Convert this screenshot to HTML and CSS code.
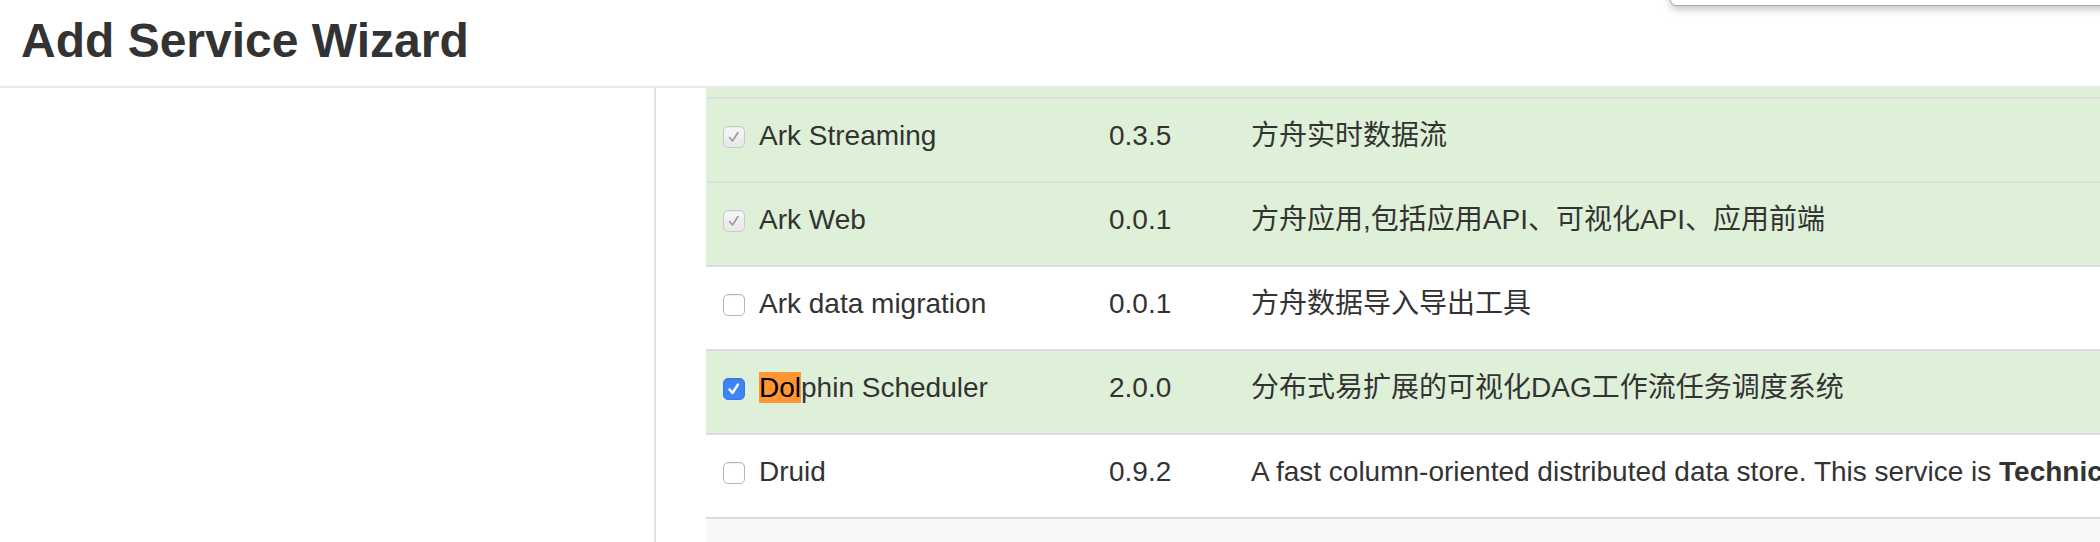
FILE: index.html
```html
<!DOCTYPE html>
<html lang="en">
<head>
<meta charset="utf-8">
<title>Add Service Wizard</title>
<link rel="stylesheet" href="styles.css">
</head>
<body>
<div class="page">
  <header class="wizard-header">
    <h1 class="wizard-title">Add Service Wizard</h1>
  </header>
  <div class="wizard-body">
    <aside class="wizard-steps"></aside>
    <main class="wizard-content">
      <div class="service-table">
        <div class="svc-row success clipped"></div>
        <div class="svc-row success">
          <div class="cell name"><span class="cb cb-disabled"><svg viewBox="0 0 22 22"><path d="M6.5 11.5 L9.5 15 L15 6.5" /></svg></span><span>Ark Streaming</span></div>
          <div class="cell version">0.3.5</div>
          <div class="cell desc">方舟实时数据流</div>
        </div>
        <div class="svc-row success">
          <div class="cell name"><span class="cb cb-disabled"><svg viewBox="0 0 22 22"><path d="M6.5 11.5 L9.5 15 L15 6.5" /></svg></span><span>Ark Web</span></div>
          <div class="cell version">0.0.1</div>
          <div class="cell desc">方舟应用,包括应用API、可视化API、应用前端</div>
        </div>
        <div class="svc-row">
          <div class="cell name"><span class="cb"></span><span>Ark data migration</span></div>
          <div class="cell version">0.0.1</div>
          <div class="cell desc">方舟数据导入导出工具</div>
        </div>
        <div class="svc-row success">
          <div class="cell name"><span class="cb cb-checked"><svg viewBox="0 0 22 22"><path d="M6.5 11.5 L9.5 15 L15 6.5" /></svg></span><span><mark class="find-hit">Dol</mark>phin Scheduler</span></div>
          <div class="cell version">2.0.0</div>
          <div class="cell desc">分布式易扩展的可视化DAG工作流任务调度系统</div>
        </div>
        <div class="svc-row">
          <div class="cell name"><span class="cb"></span><span>Druid</span></div>
          <div class="cell version">0.9.2</div>
          <div class="cell desc">A fast column-oriented distributed data store. This service is <b>Technical Preview</b>.</div>
        </div>
        <div class="svc-row striped"></div>
      </div>
    </main>
  </div>
  <div class="popover"></div>
</div>
</body>
</html>
```
FILE: styles.css
```css
html, body {
  margin: 0;
  padding: 0;
  background: #fff;
  overflow: hidden;
}
body {
  width: 2100px;
  height: 542px;
  font-family: "Liberation Sans", Arial, "Noto Sans CJK SC", sans-serif;
  color: #333;
}
.page {
  position: relative;
  width: 2100px;
  height: 542px;
  overflow: hidden;
}
.wizard-header {
  border-bottom: 2px solid #e8e8e8;
  padding-left: 21px;
  box-sizing: border-box;
  height: 88px;
}
.wizard-title {
  margin: 0;
  padding-top: 14px;
  font-size: 48px;
  line-height: 54px;
  font-weight: bold;
  color: #333;
}
.wizard-body {
  display: flex;
  height: 454px;
}
.wizard-steps {
  width: 654px;
  flex: none;
  border-right: 2px solid #e3e3e3;
}
.wizard-content {
  flex: none;
  padding-left: 50px;
  width: 1600px;
}
.service-table {
  width: 1600px;
}
.svc-row {
  display: grid;
  grid-template-columns: 403px 142px 1055px;
  height: 84px;
  box-sizing: border-box;
  border-top: 2px solid #dcdcdc;
  font-size: 28px;
  line-height: 40px;
  white-space: nowrap;
}
.svc-row.success {
  background: #dff0d8;
}
.svc-row.clipped {
  height: 9px;
  border-top: none;
}
.svc-row.striped {
  background: #f8f8f8;
}
.cell {
  padding-top: 17px;
  overflow: hidden;
}
.cell.name {
  display: flex;
  align-items: flex-start;
  padding-left: 17px;
}
.cell.desc {
  overflow: visible;
}
.cb {
  flex: none;
  width: 22px;
  height: 22px;
  margin-top: 10px;
  margin-right: 14px;
  box-sizing: border-box;
  border: 1.5px solid #b4b4b4;
  border-radius: 5px;
  background: #fff;
  box-shadow: inset 0 1px 1px rgba(0,0,0,0.06);
}
.cb svg {
  display: block;
  fill: none;
  stroke-width: 1.6;
  stroke-linecap: round;
  stroke-linejoin: round;
  margin: -1.5px;
  width: 22px;
  height: 22px;
}
.cb-disabled {
  background: linear-gradient(#f7f7f7, #e8e8e8);
  border-color: #c9c9c9;
}
.cb-disabled svg {
  stroke: #9a9a9a;
}
.cb-checked {
  background: #3d84f6;
  border-color: #3478ee;
}
.cb-checked svg {
  stroke: #fff;
  stroke-width: 2.4;
}
.find-hit {
  background: #ff9632;
  color: #000;
  padding: 0;
}
.popover {
  position: absolute;
  top: -30px;
  left: 1670px;
  width: 460px;
  height: 34px;
  background: #fff;
  border: 1px solid #a8a8a8;
  border-radius: 6px;
  box-shadow: 0 3px 9px rgba(0,0,0,0.25);
}
```
